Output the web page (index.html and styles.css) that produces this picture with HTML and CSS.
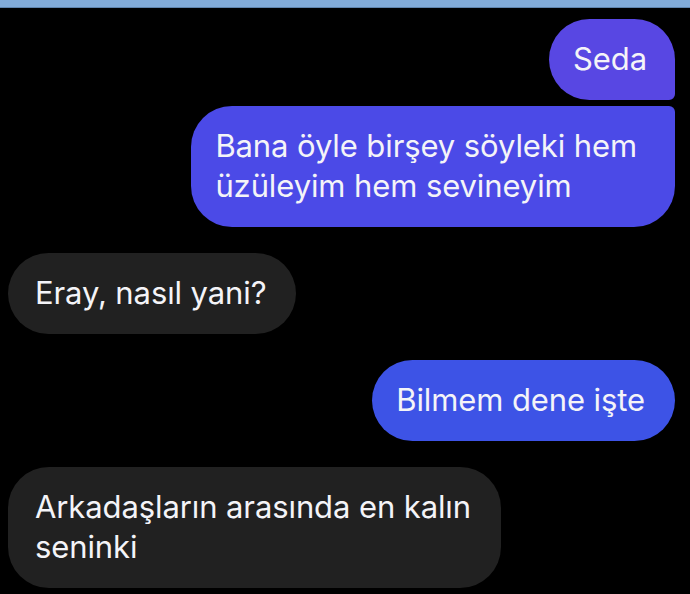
FILE: index.html
```html
<!DOCTYPE html>
<html lang="tr">
<head>
<meta charset="utf-8">
<title>Sohbet</title>
<link rel="stylesheet" href="styles.css">
</head>
<body>
<div class="topbar"></div>
<main class="chat">
  <div class="row out">
    <div class="bubble sent c1 first">Seda</div>
  </div>
  <div class="row out tight">
    <div class="bubble sent c2 last">Bana öyle birşey söyleki hem<br>üzüleyim hem sevineyim</div>
  </div>
  <div class="row in">
    <div class="bubble recv">Eray, nasıl yani?</div>
  </div>
  <div class="row out">
    <div class="bubble sent c3">Bilmem dene işte</div>
  </div>
  <div class="row in">
    <div class="bubble recv">Arkadaşların arasında en kalın<br>seninki</div>
  </div>
</main>
</body>
</html>
```
FILE: styles.css
```css
html, body {
  margin: 0;
  padding: 0;
  background: #000;
}
body {
  width: 690px;
  height: 594px;
  overflow: hidden;
  font-family: Inter, "Noto Sans", sans-serif;
}
.topbar {
  height: 7px;
  background: #82abd8;
  border-bottom: 1px solid #5f84ad;
}
.chat {
  display: flex;
  flex-direction: column;
  gap: 26px;
  padding: 11px 15px 0 8px;
}
.row {
  display: flex;
}
.row.tight {
  margin-top: -20px;
}
.row.out {
  justify-content: flex-end;
}
.row.in {
  justify-content: flex-start;
}
.bubble {
  font-size: 31px;
  line-height: 40px;
  color: #f4f4f8;
  padding: 20px 28px 21px 24px;
  border-radius: 41px;
  letter-spacing: -0.1px;
}
.sent.first {
  border-bottom-right-radius: 6px;
}
.sent.last {
  border-top-right-radius: 6px;
}
.c1 { background: #5847e3; }
.c2 { background: #4b4ae7; padding-right: 38px; }
.c3 { background: #3d53e6; padding-right: 30px; }
.recv {
  background: #212121;
  padding-left: 27px;
  padding-right: 30px;
}
```
